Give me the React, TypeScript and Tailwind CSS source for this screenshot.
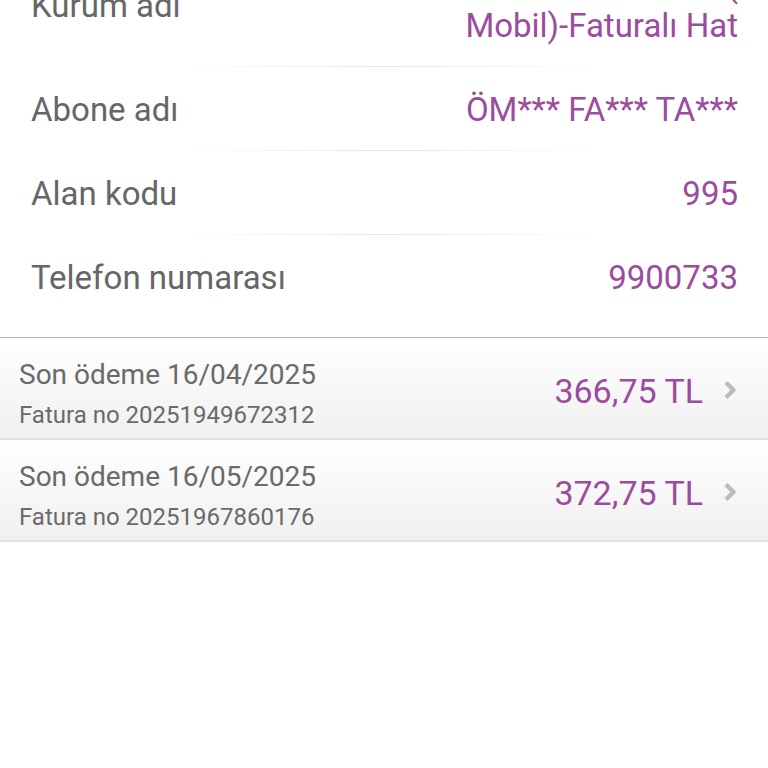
const details = [
  { label: 'Kurum adı', value: ['Türk Telekom (', 'Mobil)-Faturalı Hat'] },
  { label: 'Abone adı', value: ['ÖM*** FA*** TA***'] },
  { label: 'Alan kodu', value: ['995'] },
  { label: 'Telefon numarası', value: ['9900733'] },
]

const bills = [
  { due: '16/04/2025', no: '20251949672312', amount: '366,75 TL' },
  { due: '16/05/2025', no: '20251967860176', amount: '372,75 TL' },
]

function Chevron() {
  return (
    <svg width="16" height="20" viewBox="0 0 16 20" className="ml-[19px] -mt-[3px]">
      <path
        d="M4 2.5 L11.5 10 L4 17.5"
        fill="none"
        stroke="#bcbcbc"
        strokeWidth="4.5"
        strokeLinejoin="round"
      />
    </svg>
  )
}

function Divider() {
  return (
    <div className="flex justify-center pl-[10px]">
      <div className="h-px w-[420px] bg-gradient-to-r from-transparent via-[#e6e6e6] to-transparent" />
    </div>
  )
}

export default function App() {
  return (
    <div
      className="h-[768px] w-[768px] overflow-hidden bg-white"
      style={{ fontFamily: 'Roboto, "Noto Sans", sans-serif' }}
    >
      <div className="-mt-[57px]">
        <div className="pb-[19px]">
          {details.map((d, i) => (
            <div key={d.label}>
              {i > 0 && <Divider />}
              <div className="flex items-center justify-between pl-[31px] pr-[30px] pt-[23px] pb-[20px] text-[33px] leading-[40px]">
                <span className="text-[#666666]">{d.label}</span>
                <div className="text-right text-[#9c4c9e]">
                  {d.value.map((v) => (
                    <div key={v}>{v}</div>
                  ))}
                </div>
              </div>
            </div>
          ))}
        </div>
        <div className="border-t border-[#b8b8b8]">
          {bills.map((b) => (
            <div
              key={b.no}
              className="flex h-[102px] items-start justify-between border-b-2 border-[#e2e2e2] bg-gradient-to-b from-white to-[#f0f0f0] pt-[17px] pl-[19px] pr-[30px]"
            >
              <div className="text-[#6a6a6a]">
                <div className="text-[28px] leading-[40px]">Son ödeme {b.due}</div>
                <div className="text-[24px] leading-[40px]">Fatura no {b.no}</div>
              </div>
              <div className="mt-[16px] flex items-center">
                <span className="text-[34px] leading-[40px] text-[#9c4c9e]">{b.amount}</span>
                <Chevron />
              </div>
            </div>
          ))}
        </div>
      </div>
    </div>
  )
}
